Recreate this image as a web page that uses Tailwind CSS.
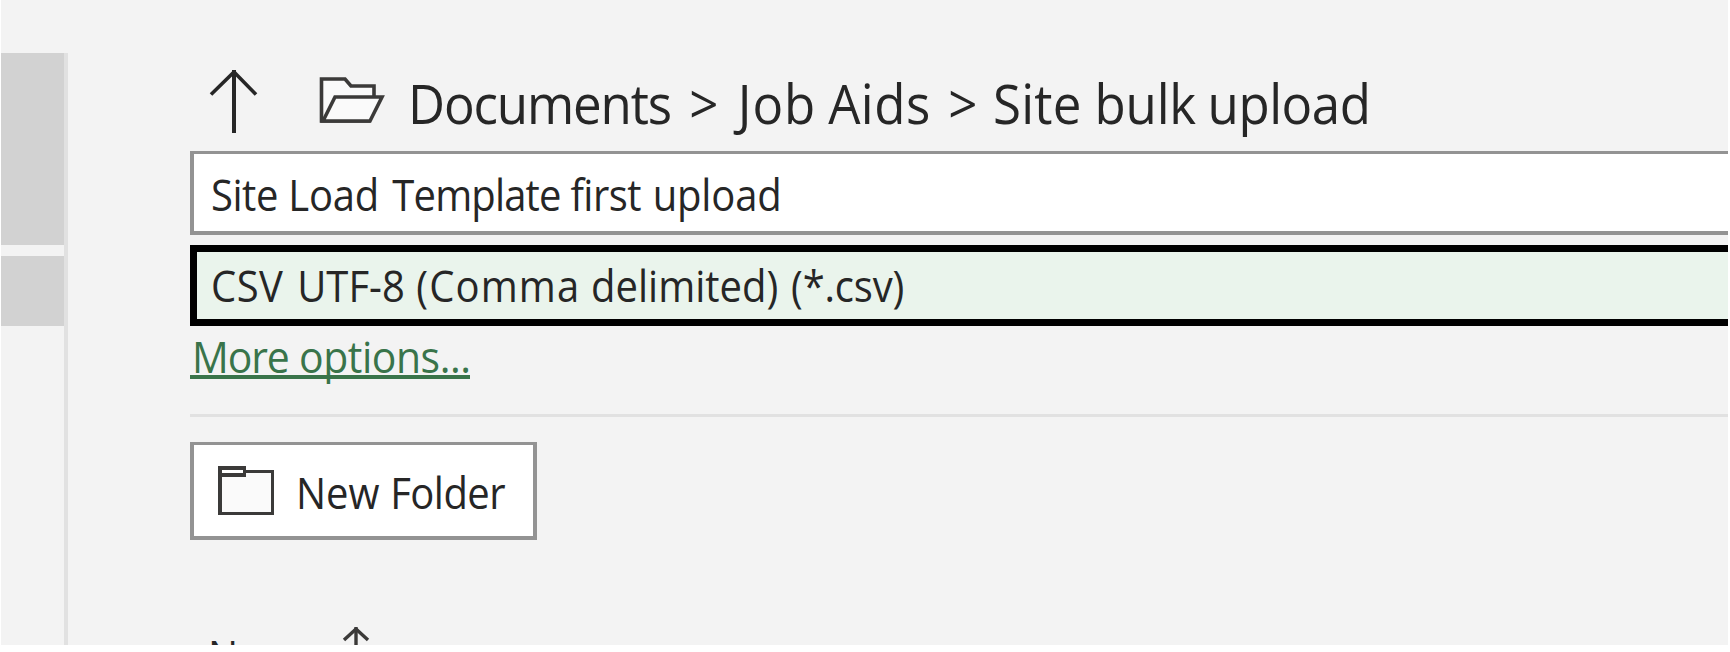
<!DOCTYPE html>
<html lang="en">
<head>
<meta charset="utf-8">
<title>Save As</title>
<script src="https://cdn.jsdelivr.net/npm/@tailwindcss/browser@4"></script>
</head>
<body class="bg-white w-[1730px] h-[652px] overflow-hidden font-['Open_Sans',sans-serif] text-[#262626]">
<div class="ml-px w-[1727px] h-[645px] bg-[#f3f3f3] flex overflow-hidden">
  <!-- Places list -->
  <aside class="mt-[53px] w-[67px] shrink-0 border-r-4 border-[#e1e1e1] flex flex-col gap-[11px]">
    <div class="h-[192px] bg-[#d2d2d2]"></div>
    <div class="h-[70px] bg-[#d2d2d2]"></div>
  </aside>

  <main class="ml-[122px] flex-1 min-w-0 flex flex-col items-stretch">
    <!-- Breadcrumb -->
    <div class="mt-[67px] h-[84px] flex items-start shrink-0">
      <svg class="ml-[18px] mt-[3px] shrink-0" width="50" height="64" viewBox="208 70 50 64" fill="none" stroke="#262626">
        <path d="M234 70V133" stroke-width="4"/>
        <path d="M211 94.5L234 72L256 94.5" stroke-width="3.6"/>
      </svg>
      <svg class="ml-[61px] mt-[7px] shrink-0" width="68" height="52" viewBox="319 74 68 52" fill="#fafafa" stroke="#3b3a39" stroke-width="3.6">
        <path d="M321.500 121V79H345L351 86H374V97L369 121Z"/>
        <path d="M323 121L335 97H382L370 121Z"/>
      </svg>
      <div class="ml-[21px] mt-[6px] flex origin-left scale-x-[0.945] whitespace-nowrap text-[54px] leading-[60px]">
        <span class="w-[297.6px] shrink-0 tracking-[-1.2px]">Documents</span>
        <span class="w-[51.4px] shrink-0">&gt;</span>
        <span class="w-[95.6px] shrink-0 tracking-[1px]">Job</span>
        <span class="w-[127px] shrink-0 tracking-[0.5px]">Aids</span>
        <span class="w-[47.4px] shrink-0">&gt;</span>
        <span class="w-[107.5px] shrink-0 tracking-[0.3px]">Site</span>
        <span class="w-[119.7px] shrink-0 tracking-[-0.2px]">bulk</span>
        <span class="shrink-0 tracking-[-0.5px]">upload</span>
      </div>
    </div>

    <!-- File name -->
    <div class="h-[84px] shrink-0 border-l-4 border-t-3 border-b-4 border-[#939393] bg-white pl-[17px] pt-[2px]">
      <div class="flex origin-left scale-x-[0.93] whitespace-nowrap text-[43px] leading-[77px]">
        <span class="w-[83px] shrink-0 tracking-[-0.5px]">Site</span>
        <span class="w-[112px] shrink-0 tracking-[-0.2px]">Load</span>
        <span class="w-[191.5px] shrink-0 tracking-[-0.9px]">Template</span>
        <span class="w-[88.5px] shrink-0 tracking-[-0.6px]">first</span>
        <span class="shrink-0 tracking-[-0.2px]">upload</span>
      </div>
    </div>

    <!-- File type -->
    <div class="mt-[10px] h-[81px] shrink-0 border-y-7 border-l-7 border-black bg-[#eaf4ec] pl-[14px] pt-px">
      <div class="flex origin-left scale-x-[0.93] whitespace-nowrap text-[43px] leading-[65px]">
        <span class="w-[92.7px] shrink-0 tracking-[0.5px]">CSV</span>
        <span class="w-[128px] shrink-0">UTF-8</span>
        <span class="w-[188px] shrink-0 tracking-[1.2px]">(Comma</span>
        <span class="w-[215px] shrink-0">delimited)</span>
        <span class="shrink-0 tracking-[-0.2px]">(*.csv)</span>
      </div>
    </div>

    <a class="mt-[5px] w-[280px] h-[48px] shrink-0 border-b-4 border-[#39744a] text-[#39744a]">
      <span class="ml-[2px] pt-px flex origin-left scale-x-[0.93] whitespace-nowrap text-[44px] leading-[48px]">
        <span class="w-[115.2px] shrink-0 tracking-[-1.2px]">More</span>
        <span class="shrink-0 tracking-[-0.5px]">options...</span>
      </span>
    </a>

    <div class="mt-[35px] h-[3px] shrink-0 bg-[#e1e1e1]"></div>

    <!-- New folder -->
    <button class="mt-[25px] w-[347px] h-[98px] shrink-0 border-4 border-t-3 border-[#939393] bg-white flex items-start text-left">
      <svg class="ml-[24px] mt-[21px] shrink-0" width="56" height="49" viewBox="218 466 56 49">
        <path d="M218 466H246V470H274V515H218Z" fill="#3b3a39"/>
        <path d="M222 477H246V473H271V512H222Z" fill="#fafafa"/>
        <path d="M222 470H243V473H222Z" fill="#fff"/>
      </svg>
      <span class="ml-[22px] mt-[2px] flex origin-left scale-x-[0.93] whitespace-nowrap text-[43px] leading-[91px]">
        <span class="w-[101.4px] shrink-0">New</span>
        <span class="shrink-0 tracking-[-0.6px]">Folder</span>
      </span>
    </button>

    <!-- File list header -->
    <div class="mt-[85px] ml-[18px] flex items-start shrink-0">
      <span class="mt-[1px] w-[133px] text-[43px] leading-[60px] origin-left scale-x-[0.93]">Name</span>
      <svg class="mt-[2px] shrink-0" width="30" height="40" viewBox="341.500 627 30 40" fill="none" stroke="#3b3a39">
        <path d="M356.500 627V660" stroke-width="3.4"/>
        <path d="M344.500 640L356.500 629L368.500 640" stroke-width="3.4"/>
      </svg>
    </div>
  </main>
</div>
</body>
</html>
